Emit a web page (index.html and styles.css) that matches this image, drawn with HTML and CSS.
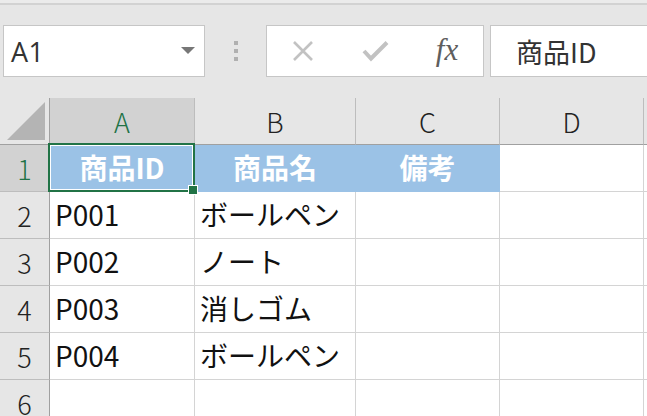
FILE: index.html
```html
<!DOCTYPE html>
<html lang="ja">
<head>
<meta charset="utf-8">
<link rel="stylesheet" href="styles.css">
</head>
<body>
<div class="app">
  <div class="topline"></div>
  <div class="fbar">
    <div class="namebox"><span class="nb-text">A1</span><span class="caret"></span></div>
    <div class="grip"><i></i><i></i><i></i></div>
    <div class="btns">
      <span class="btn"><svg width="22" height="22" viewBox="0 0 22 22"><path d="M2 2 L20 20 M20 2 L2 20" stroke="#c2c2c2" stroke-width="2.6" fill="none"/></svg></span>
      <span class="btn"><svg width="27" height="22" viewBox="0 0 27 22"><path d="M2 11 L9 18.5 L25 2.5" stroke="#c2c2c2" stroke-width="4" fill="none" stroke-linejoin="miter"/></svg></span>
      <span class="btn fx">fx</span>
    </div>
    <div class="finput">商品ID</div>
  </div>
  <div class="sheet">
    <div class="corner"><svg width="49" height="46" viewBox="0 0 49 46"><polygon points="7,42 45,42 45,4" fill="#b4b4b4"/></svg></div>
    <div class="ch sel">A</div>
    <div class="ch">B</div>
    <div class="ch">C</div>
    <div class="ch">D</div>
    <div class="ch"></div>

    <div class="rh sel">1</div>
    <div class="c hd a1">商品ID<div class="selbox"><span class="handle"></span></div></div>
    <div class="c hd">商品名</div>
    <div class="c hd">備考</div>
    <div class="c"></div>
    <div class="c"></div>

    <div class="rh">2</div>
    <div class="c">P001</div>
    <div class="c">ボールペン</div>
    <div class="c"></div>
    <div class="c"></div>
    <div class="c"></div>

    <div class="rh">3</div>
    <div class="c">P002</div>
    <div class="c">ノート</div>
    <div class="c"></div>
    <div class="c"></div>
    <div class="c"></div>

    <div class="rh">4</div>
    <div class="c">P003</div>
    <div class="c">消しゴム</div>
    <div class="c"></div>
    <div class="c"></div>
    <div class="c"></div>

    <div class="rh">5</div>
    <div class="c">P004</div>
    <div class="c">ボールペン</div>
    <div class="c"></div>
    <div class="c"></div>
    <div class="c"></div>

    <div class="rh">6</div>
    <div class="c"></div>
    <div class="c"></div>
    <div class="c"></div>
    <div class="c"></div>
    <div class="c"></div>
  </div>
</div>
</body>
</html>
```

FILE: styles.css
```css
* { box-sizing: border-box; }
html, body {
  margin: 0;
  padding: 0;
  width: 647px;
  height: 416px;
  overflow: hidden;
  background: #e6e6e6;
  font-family: "Noto Sans CJK JP", "Noto Sans", sans-serif;
}
.app { width: 647px; height: 416px; overflow: hidden; }
.topline {
  height: 5px;
  background: #ebebeb;
  border-bottom: 2px solid #d2d2d2;
}
.fbar {
  display: flex;
  align-items: stretch;
  height: 52px;
  margin-top: 20px;
  padding-left: 3px;
  width: 900px;
}
.fbar > * { flex: none; }
.namebox {
  width: 202px;
  background: #fff;
  border: 1px solid #c6c6c6;
  display: flex;
  align-items: center;
  justify-content: space-between;
  padding: 0 9px 0 7px;
}
.nb-text {
  font-family: "Open Sans", "Noto Sans", sans-serif;
  font-size: 27px;
  color: #333;
  letter-spacing: 0.5px;
}
.caret {
  width: 0; height: 0;
  border-left: 7px solid transparent;
  border-right: 7px solid transparent;
  border-top: 7px solid #777;
  margin-top: -2px;
}
.grip {
  width: 61px;
  display: flex;
  flex-direction: column;
  align-items: center;
  justify-content: center;
  gap: 4px;
}
.grip i {
  display: block;
  width: 4px; height: 4px;
  background: #b0b0b0;
}
.btns {
  width: 218px;
  background: #fff;
  border: 1px solid #c6c6c6;
  display: flex;
}
.btn {
  width: 72px;
  display: flex;
  align-items: center;
  justify-content: center;
}
.fx {
  font-family: "Liberation Serif", serif;
  font-style: italic;
  font-size: 31px;
  color: #5e5e5e;
  padding-bottom: 3px;
}
.finput {
  margin-left: 6px;
  width: 300px;
  background: #fff;
  border: 1px solid #c6c6c6;
  padding-left: 25px;
  display: flex;
  align-items: center;
  font-size: 27px;
  color: #333;
}
.sheet {
  margin-top: 21px;
  display: grid;
  grid-template-columns: 50px 145px 161px 144px 144px 40px;
  grid-auto-rows: 47px;
  width: 700px;
}
.corner {
  background: #e6e6e6;
  border-right: 1px solid #a0a0a0;
  border-bottom: 1px solid #a0a0a0;
}
.corner svg { display: block; }
.ch {
  background: #e6e6e6;
  border-right: 1px solid #bdbdbd;
  border-bottom: 1px solid #a0a0a0;
  display: flex;
  align-items: center;
  justify-content: center;
  font-size: 27px;
  font-weight: 300;
  color: #222;
}
.ch.sel, .rh.sel {
  background: #d2d2d2;
  color: #217346;
}
.rh {
  background: #e6e6e6;
  border-right: 1px solid #a0a0a0;
  border-bottom: 1px solid #bdbdbd;
  display: flex;
  align-items: center;
  justify-content: center;
  font-size: 27px;
  font-weight: 300;
  color: #222;
}
.c {
  background: #fff;
  border-right: 1px solid #d4d4d4;
  border-bottom: 1px solid #d4d4d4;
  display: flex;
  align-items: center;
  padding-left: 5px;
  padding-bottom: 3px;
  font-size: 28px;
  color: #111;
  white-space: nowrap;
  position: relative;
}
.c.hd {
  background: #9bc2e6;
  border-color: #9bc2e6;
  color: #fff;
  font-weight: 700;
  justify-content: center;
  padding-left: 0;
}
.c.a1 { z-index: 2; }
.selbox {
  position: absolute;
  top: -2px;
  left: -2px;
  right: -1px;
  bottom: -1px;
  border: 2px solid #217346;
  box-shadow: inset 0 0 0 1px #fff;
}
.handle {
  position: absolute;
  right: -5px;
  bottom: -5px;
  width: 10px;
  height: 10px;
  background: #217346;
  border: 1px solid #fff;
}
```
